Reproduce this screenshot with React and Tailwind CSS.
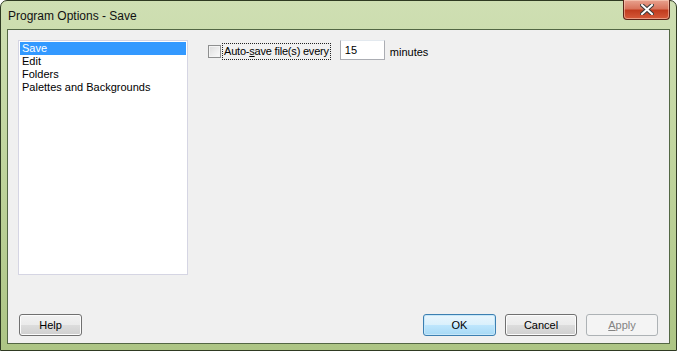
import React, { useState } from "react";

const options = ["Save", "Edit", "Folders", "Palettes and Backgrounds"];

const WinButton = ({ children, variant = "normal" }) => {
  const base =
    "w-full h-[22px] rounded-[3px] border text-[11px] leading-none flex items-center justify-center";
  if (variant === "default") {
    return (
      <button
        className={`${base} border-[#3c7fb1] text-black bg-[linear-gradient(#eaf6fd_0%,#d9f0fc_50%,#bee6fd_50%,#a7d9f5_100%)] shadow-[inset_0_0_0_1px_#c6e7f9]`}
      >
        {children}
      </button>
    );
  }
  if (variant === "disabled") {
    return (
      <button
        className={`${base} border-[#adb2b5] text-[#838383] bg-[#f4f4f4]`}
      >
        {children}
      </button>
    );
  }
  return (
    <button
      className={`${base} border-[#707070] text-black bg-[linear-gradient(#f2f2f2_0%,#ebebeb_50%,#dddddd_50%,#cfcfcf_100%)] shadow-[inset_0_0_0_1px_#fcfcfc]`}
    >
      {children}
    </button>
  );
};

export default function App() {
  const [selected, setSelected] = useState(0);
  const [minutes, setMinutes] = useState("15");

  return (
    <div className="w-[677px] h-[351px] font-['Liberation_Sans',Arial,sans-serif] text-[11px] text-black">
      {/* Window frame */}
      <div className="w-full h-full flex flex-col rounded-t-[7px] border border-[#2f3a22] bg-[linear-gradient(180deg,#cfdfb3_0%,#c2d6a0_40%,#adc585_100%)] px-[6px] pb-[6px]">
        {/* Title bar */}
        <div className="h-[28px] flex items-start justify-between">
          <div className="pt-[6px] pl-[1px] text-[12px] text-[#111]">
            Program Options - Save
          </div>
          <div className="-mt-px w-[47px] h-[20px] rounded-b-[4px] border border-[#5a2418] border-t-0 bg-[linear-gradient(#e8a28f_0%,#d9755d_45%,#c13c1f_55%,#d65a3a_100%)] flex items-center justify-center shadow-[inset_0_0_0_1px_rgba(255,220,200,0.5)]">
            <svg width="14" height="11" viewBox="0 0 14 11">
              <path
                d="M2 1 L12 10 M12 1 L2 10"
                stroke="#3a3a3a"
                strokeWidth="4"
                strokeLinecap="square"
              />
              <path
                d="M2 1 L12 10 M12 1 L2 10"
                stroke="#ffffff"
                strokeWidth="2"
                strokeLinecap="square"
              />
            </svg>
          </div>
        </div>

        {/* Client area */}
        <div className="flex-1 flex flex-col border border-[#536744] bg-[#f0f0f0] px-[10px] pt-[10px] pb-[7px]">
          <div className="flex-1 flex">
            {/* Category list */}
            <div className="w-[170px] h-[235px] bg-white border border-[#d5d5e3] p-px">
              {options.map((item, i) => (
                <div
                  key={item}
                  onClick={() => setSelected(i)}
                  className={`h-[13px] leading-[13px] pl-[2px] ${
                    selected === i ? "bg-[#3399ff] text-white" : "text-black"
                  }`}
                >
                  {item}
                </div>
              ))}
            </div>

            {/* Save settings */}
            <div className="ml-[20px] flex items-start">
              <div className="flex items-center mt-[3px]">
                <div className="w-[13px] h-[13px] border border-[#8e8f8f] bg-[linear-gradient(135deg,#dcdcdc,#fbfbfb)] shadow-[inset_0_0_0_1px_#f4f4f4]" />
                <span className="ml-px px-px border border-dotted border-[#222] leading-[15px] tracking-[-0.2px]">
                  Auto-<span className="underline">s</span>ave file(s) every
                </span>
              </div>
              <input
                value={minutes}
                onChange={(e) => setMinutes(e.target.value)}
                className="ml-[9px] w-[45px] h-[20px] border border-[#abadb3] border-t-[#e3e9ef] bg-white px-[4px] text-[11px] text-black outline-none"
              />
              <span className="ml-[5px] mt-[4px]">minutes</span>
            </div>
          </div>

          {/* Buttons */}
          <div className="flex items-center">
            <div className="ml-px w-[63px]">
              <WinButton>Help</WinButton>
            </div>
            <div className="ml-auto mr-px flex gap-[9px]">
              <div className="w-[73px]">
                <WinButton variant="default">OK</WinButton>
              </div>
              <div className="w-[72px]">
                <WinButton>Cancel</WinButton>
              </div>
              <div className="w-[72px]">
                <WinButton variant="disabled">
                  <span className="underline">A</span>pply
                </WinButton>
              </div>
            </div>
          </div>
        </div>
      </div>
    </div>
  );
}
